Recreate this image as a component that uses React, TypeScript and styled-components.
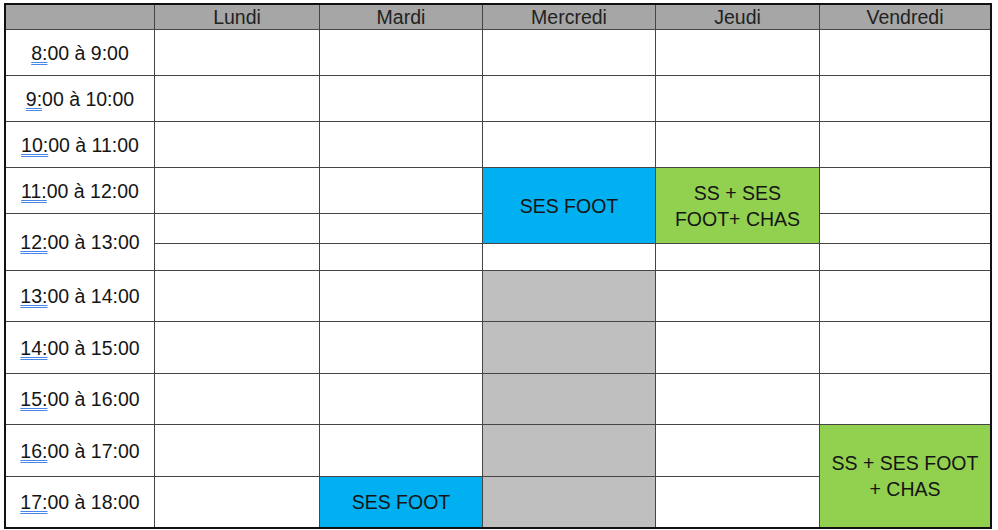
import React from "react";
import styled, { createGlobalStyle } from "styled-components";

const Global = createGlobalStyle`
  html, body { margin: 0; padding: 0; background: #ffffff; }
  body { font-family: "Liberation Sans", Arial, sans-serif; }
`;

const Page = styled.div`
  padding: 3px 0 0 4px;
  width: 998px;
  box-sizing: border-box;
`;

const Table = styled.div`
  display: grid;
  width: 988px;
  box-sizing: border-box;
  grid-template-columns: 148px 164px 162px 172px 163px 170px;
  grid-template-rows: 24px 45px 45px 45px 45px 29px 26px 50px 51px 50px 51px 50px;
  gap: 1px;
  background: #454545;
  border: 2px solid #111111;
`;

type Tone = "white" | "head" | "blue" | "green" | "grey";

const toneColor: Record<Tone, string> = {
  white: "#ffffff",
  head: "#a6a6a6",
  blue: "#00b0f0",
  green: "#92d050",
  grey: "#bfbfbf",
};

const Cell = styled.div<{ $tone: Tone; $span: number }>`
  grid-row: span ${(p) => p.$span};
  background: ${(p) => toneColor[p.$tone]};
  display: flex;
  align-items: center;
  justify-content: center;
  text-align: center;
  padding: 0 5px;
  box-sizing: border-box;
  font-size: 19.5px;
  line-height: 26px;
  color: #151515;
  overflow: hidden;
`;

const HeadText = styled.span`
  color: #222222;
  line-height: 22px;
`;

const Hour = styled.span`
  text-decoration: underline double #4a86e8;
  text-decoration-thickness: 1px;
  text-underline-offset: 2px;
`;

type CellDef = { tone?: Tone; span?: number; text?: string; time?: [string, string] };

const days = ["Lundi", "Mardi", "Mercredi", "Jeudi", "Vendredi"];

const E: CellDef = {};
const G: CellDef = { tone: "grey" };

const t = (h: string, rest: string): CellDef => ({ time: [h, rest] });

const body: CellDef[][] = [
  [t("8:", "00 à 9:00"), E, E, E, E, E],
  [t("9:", "00 à 10:00"), E, E, E, E, E],
  [t("10:", "00 à 11:00"), E, E, E, E, E],
  [
    t("11:", "00 à 12:00"),
    E,
    E,
    { tone: "blue", span: 2, text: "SES FOOT" },
    { tone: "green", span: 2, text: "SS + SES FOOT+ CHAS" },
    E,
  ],
  [{ time: ["12:", "00 à 13:00"], span: 2 }, E, E, E],
  [E, E, E, E, E],
  [t("13:", "00 à 14:00"), E, E, G, E, E],
  [t("14:", "00 à 15:00"), E, E, G, E, E],
  [t("15:", "00 à 16:00"), E, E, G, E, E],
  [t("16:", "00 à 17:00"), E, E, G, E, { tone: "green", span: 2, text: "SS + SES FOOT + CHAS" }],
  [t("17:", "00 à 18:00"), E, { tone: "blue", text: "SES FOOT" }, G, E],
];

export default function App() {
  return (
    <>
      <Global />
      <Page>
        <Table>
          <Cell $tone="head" $span={1} />
          {days.map((d) => (
            <Cell key={d} $tone="head" $span={1}>
              <HeadText>{d}</HeadText>
            </Cell>
          ))}
          {body.map((row, ri) =>
            row.map((c, ci) => (
              <Cell key={`${ri}-${ci}`} $tone={c.tone ?? "white"} $span={c.span ?? 1}>
                {c.time ? (
                  <span>
                    <Hour>{c.time[0]}</Hour>
                    {c.time[1]}
                  </span>
                ) : (
                  c.text
                )}
              </Cell>
            ))
          )}
        </Table>
      </Page>
    </>
  );
}
